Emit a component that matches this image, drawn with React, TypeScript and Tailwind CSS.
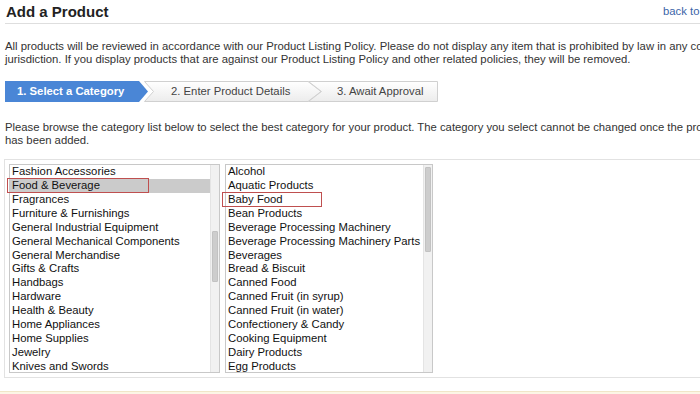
const LEFT_CATS = [
  'Fashion Accessories',
  'Food & Beverage',
  'Fragrances',
  'Furniture & Furnishings',
  'General Industrial Equipment',
  'General Mechanical Components',
  'General Merchandise',
  'Gifts & Crafts',
  'Handbags',
  'Hardware',
  'Health & Beauty',
  'Home Appliances',
  'Home Supplies',
  'Jewelry',
  'Knives and Swords',
  'Lighting',
]

const RIGHT_CATS = [
  'Alcohol',
  'Aquatic Products',
  'Baby Food',
  'Bean Products',
  'Beverage Processing Machinery',
  'Beverage Processing Machinery Parts',
  'Beverages',
  'Bread & Biscuit',
  'Canned Food',
  'Canned Fruit (in syrup)',
  'Canned Fruit (in water)',
  'Confectionery & Candy',
  'Cooking Equipment',
  'Dairy Products',
  'Egg Products',
  'Fish Products',
]

function StepShape({ kind }: { kind: 'first' | 'mid' | 'last' }) {
  if (kind === 'first') {
    return (
      <svg className="absolute inset-0" width="143" height="21" viewBox="0 0 143 21">
        <polygon points="0,0 134,0 143,10.5 134,21 0,21" fill="#4a86d6" />
      </svg>
    )
  }
  if (kind === 'mid') {
    return (
      <svg className="absolute inset-0" width="178" height="21" viewBox="0 0 178 21">
        <defs>
          <linearGradient id="g2" x1="0" y1="0" x2="0" y2="1">
            <stop offset="0" stopColor="#ffffff" />
            <stop offset="1" stopColor="#ececec" />
          </linearGradient>
        </defs>
        <polygon points="0.5,0.5 164,0.5 177,10.5 164,20.5 0.5,20.5 9.5,10.5" fill="url(#g2)" stroke="#d0d0d0" />
      </svg>
    )
  }
  return (
    <svg className="absolute inset-0" width="130" height="21" viewBox="0 0 130 21">
      <defs>
        <linearGradient id="g3" x1="0" y1="0" x2="0" y2="1">
          <stop offset="0" stopColor="#ffffff" />
          <stop offset="1" stopColor="#ececec" />
        </linearGradient>
      </defs>
      <polygon points="0.5,0.5 129.5,0.5 129.5,20.5 0.5,20.5 13.5,10.5" fill="url(#g3)" stroke="#d0d0d0" />
    </svg>
  )
}

function CategoryList({
  items,
  selected,
  outlined,
  outline,
  width,
  thumbTop,
  thumbHeight,
}: {
  items: string[]
  selected?: string
  outlined: string
  outline: string
  width: string
  thumbTop: string
  thumbHeight: string
}) {
  return (
    <div className={`${width} h-[209px] border border-[#c8c8c8] bg-white flex`}>
      <div className="flex-1 h-[207px] overflow-x-visible overflow-y-clip">
        {items.map(item => (
          <div
            key={item}
            className={`relative h-[13.93px] leading-[13px] pl-[2px] whitespace-nowrap text-[#111] ${
              item === selected ? 'bg-[#cbcbcb]' : ''
            }`}
          >
            {item}
            {item === outlined && (
              <div className={`absolute top-[-1px] h-[15px] border border-[#bf4f4f] ${outline}`} />
            )}
          </div>
        ))}
      </div>
      {/* fake scrollbar */}
      <div className="w-[9px] h-[207px] bg-[#f1f1f1] border-l border-[#e4e4e4]">
        <div className={`mx-[1px] rounded-[1px] bg-[#cdcdcd] border border-[#c2c2c2] ${thumbTop} ${thumbHeight}`} />
      </div>
    </div>
  )
}

export default function App() {
  return (
    <div
      className="w-[700px] h-[394px] overflow-hidden bg-white text-[11.3px] text-[#333]"
      style={{ fontFamily: '"Liberation Sans", Arial, sans-serif' }}
    >
      <div className="w-[820px]">
        {/* Header */}
        <div className="ml-[5px] h-[24px] border-b border-[#dedede] flex items-center">
          <h1 className="w-[658px] pl-[1px] text-[15px] font-bold text-[#222] leading-[23px]">Add a Product</h1>
          <a className="text-[#3b64a8] leading-[23px] whitespace-nowrap">back to My Products</a>
        </div>

        {/* Policy note */}
        <p className="mt-[16px] ml-[5px] leading-[13px] whitespace-nowrap">
          All products will be reviewed in accordance with our Product Listing Policy. Please do not display any item that is prohibited by law in any country or
          <br />
          jurisdiction. If you display products that are against our Product Listing Policy and other related policies, they will be removed.
        </p>

        {/* Steps */}
        <div className="mt-[15px] ml-[5px] flex h-[21px]">
          <div className="relative w-[143px] h-[21px]">
            <StepShape kind="first" />
            <span className="relative pl-[12px] leading-[21px] font-bold text-white whitespace-nowrap">1. Select a Category</span>
          </div>
          <div className="relative w-[178px] h-[21px] ml-[-4px]">
            <StepShape kind="mid" />
            <span className="relative pl-[27px] leading-[21px] text-[#444] whitespace-nowrap">2. Enter Product Details</span>
          </div>
          <div className="relative w-[130px] h-[21px] ml-[-14px]">
            <StepShape kind="last" />
            <span className="relative pl-[29px] leading-[21px] text-[#444] whitespace-nowrap">3. Await Approval</span>
          </div>
        </div>

        <p className="mt-[19px] ml-[5px] leading-[13px] whitespace-nowrap">
          Please browse the category list below to select the best category for your product. The category you select cannot be changed once the product
          <br />
          has been added.
        </p>

        {/* Category picker */}
        <div className="mt-[12px] ml-[4px] border border-[#e2e2e2] pt-[4px] pb-[4px] pl-[4px] flex gap-[5px]">
          <CategoryList
            items={LEFT_CATS}
            selected="Food & Beverage"
            outlined="Food & Beverage"
            outline="left-[-3px] w-[142px]"
            width="w-[211px]"
            thumbTop="mt-[66px]"
            thumbHeight="h-[51px]"
          />
          <CategoryList
            items={RIGHT_CATS}
            outlined="Baby Food"
            outline="left-[-4px] w-[100px]"
            width="w-[208px]"
            thumbTop="mt-[2px]"
            thumbHeight="h-[85px]"
          />
        </div>

        <div className="mt-[13px] h-[20px] bg-[#fcf6e6] border-t border-[#f1e6c8]" />
      </div>
    </div>
  )
}
